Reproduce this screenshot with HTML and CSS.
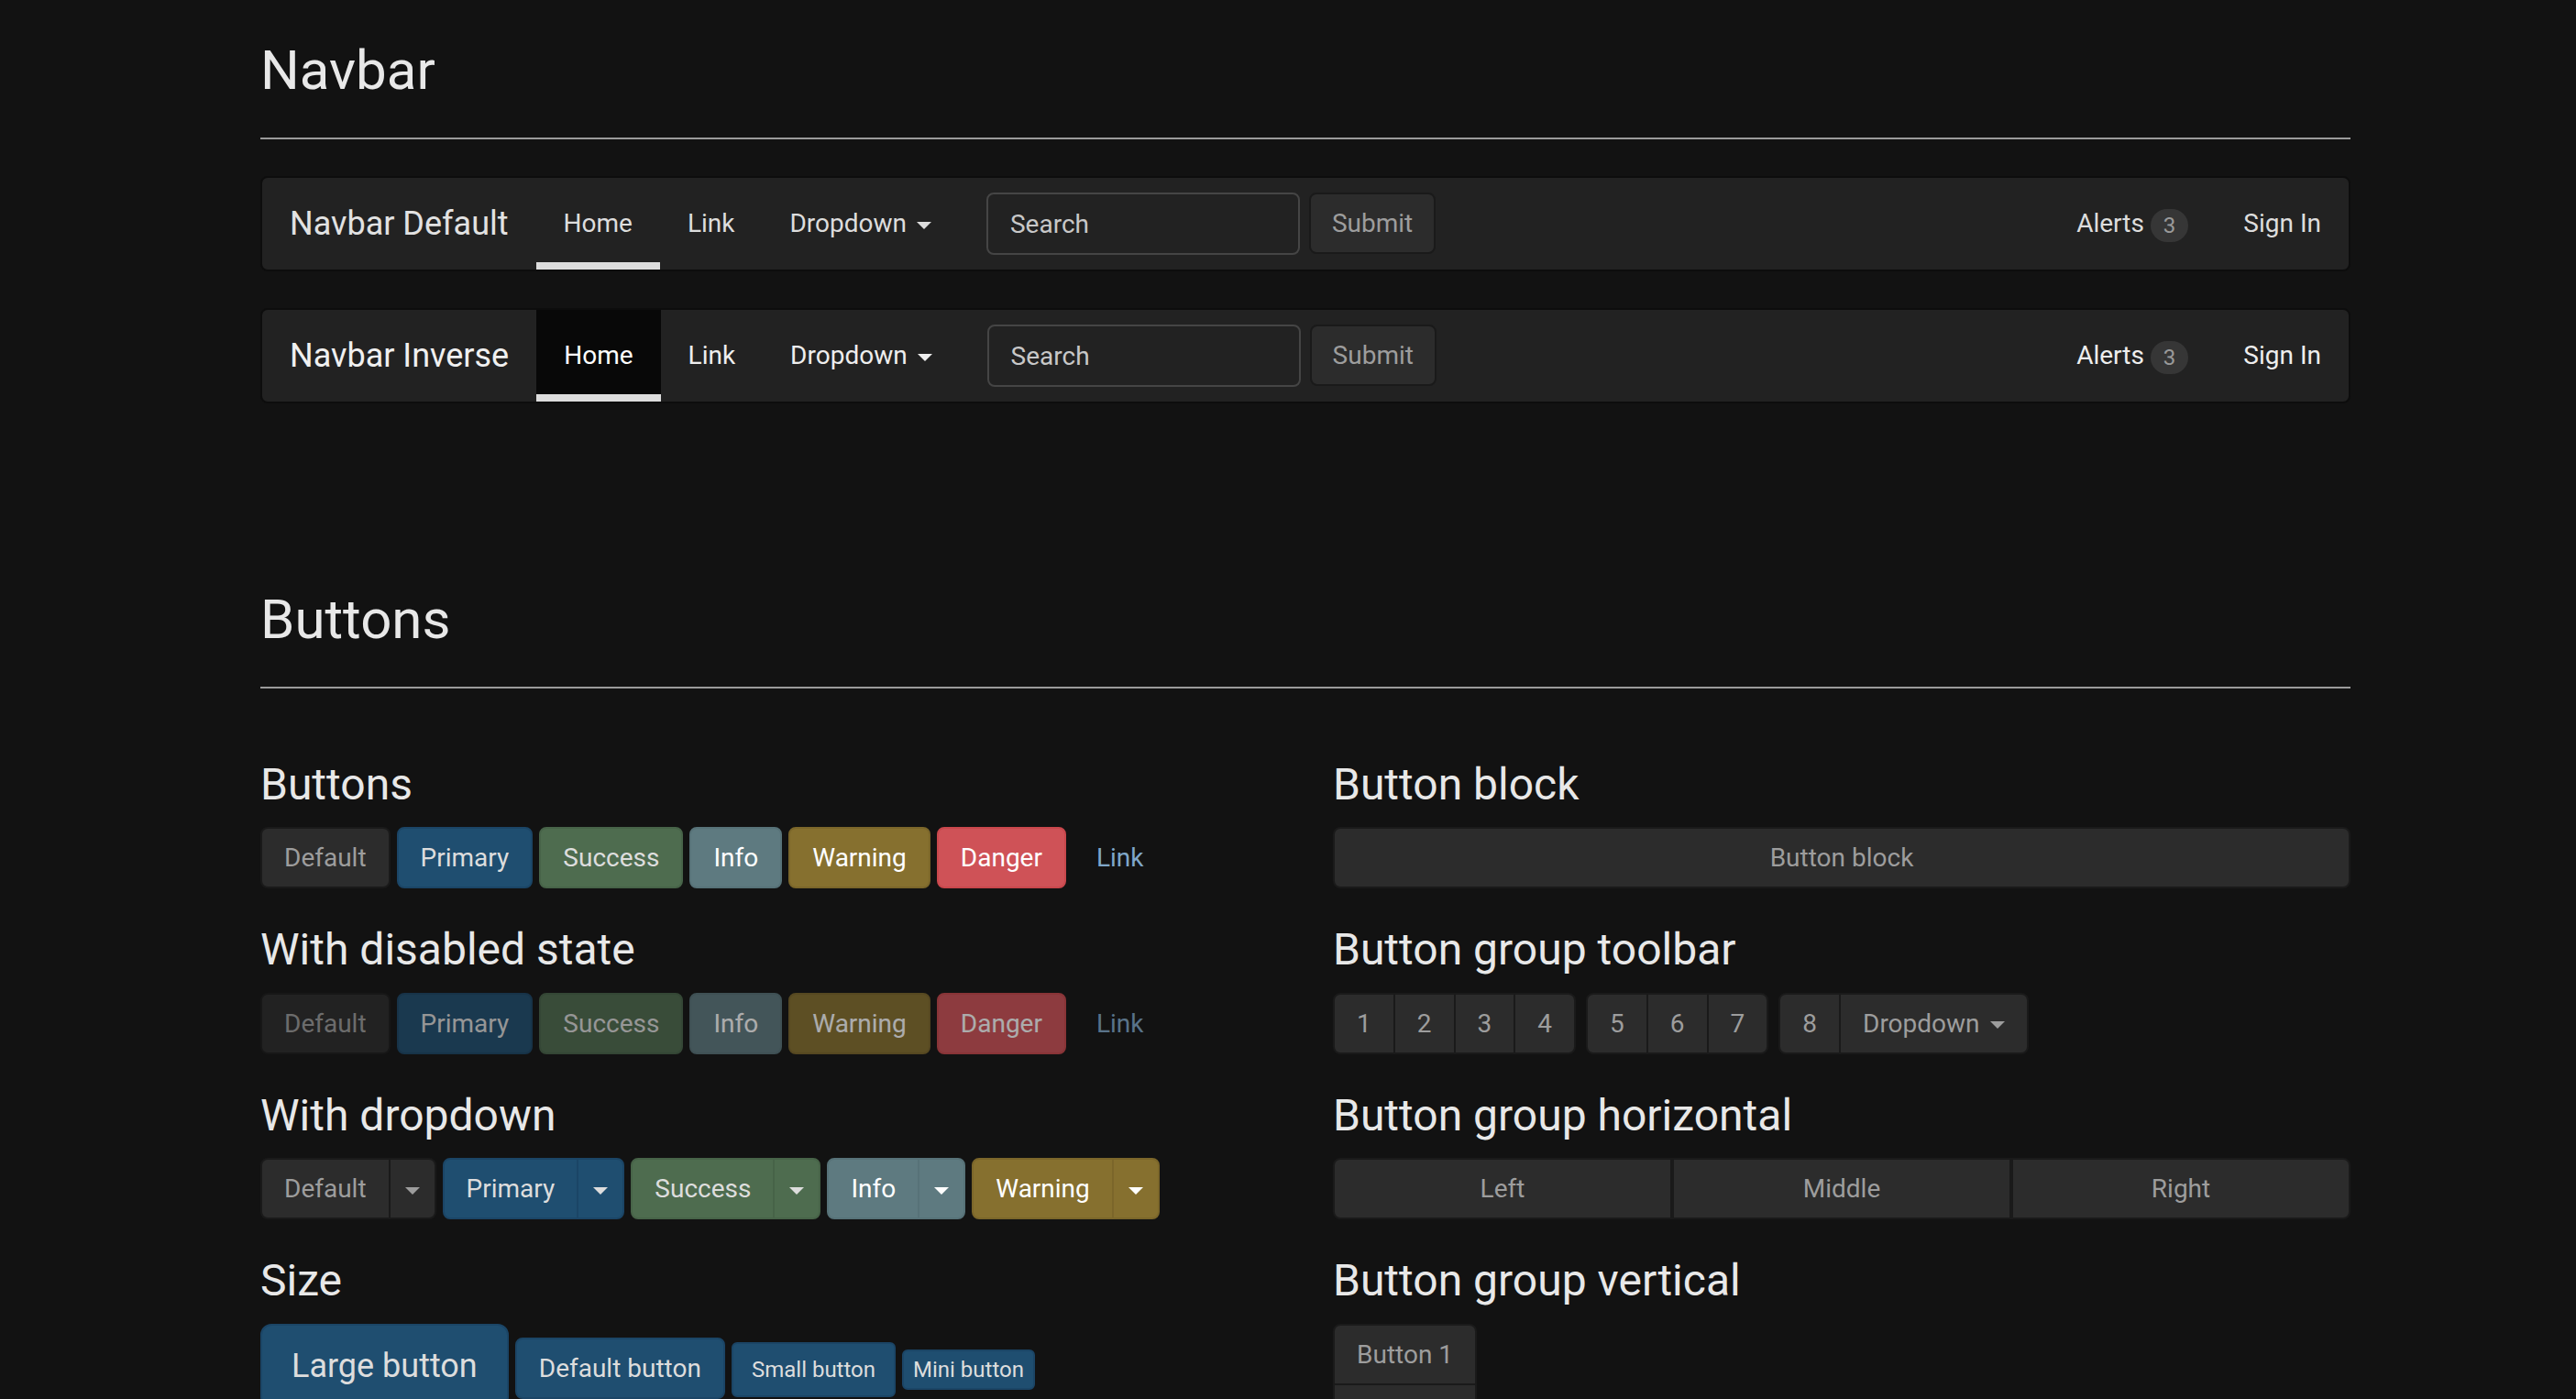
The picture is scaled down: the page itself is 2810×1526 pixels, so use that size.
FILE: index.html
```html
<!DOCTYPE html>
<html lang="en">
<head>
<meta charset="utf-8">
<title>Navbar &amp; Buttons</title>
<link rel="stylesheet" href="styles.css">
</head>
<body>
<div class="container">

  <section class="section section-navbar">
    <div class="page-header"><h1>Navbar</h1></div>

    <nav class="navbar">
      <a class="navbar-brand" href="#">Navbar Default</a>
      <ul class="nav">
        <li class="active"><a href="#">Home</a></li>
        <li><a href="#">Link</a></li>
        <li><a href="#">Dropdown <span class="caret"></span></a></li>
      </ul>
      <form class="navbar-form">
        <input class="form-control" type="text" placeholder="Search">
        <button type="button" class="btn">Submit</button>
      </form>
      <ul class="nav nav-right">
        <li><a href="#">Alerts <span class="badge">3</span></a></li>
        <li><a href="#">Sign In</a></li>
      </ul>
    </nav>

    <nav class="navbar navbar-inverse">
      <a class="navbar-brand" href="#">Navbar Inverse</a>
      <ul class="nav">
        <li class="active"><a href="#">Home</a></li>
        <li><a href="#">Link</a></li>
        <li><a href="#">Dropdown <span class="caret"></span></a></li>
      </ul>
      <form class="navbar-form">
        <input class="form-control" type="text" placeholder="Search">
        <button type="button" class="btn">Submit</button>
      </form>
      <ul class="nav nav-right">
        <li><a href="#">Alerts <span class="badge">3</span></a></li>
        <li><a href="#">Sign In</a></li>
      </ul>
    </nav>
  </section>

  <section class="section section-buttons">
    <div class="page-header"><h1>Buttons</h1></div>

    <div class="row">
      <div class="col">
        <h3>Buttons</h3>
        <div class="btn-row">
          <button type="button" class="btn">Default</button>
          <button type="button" class="btn btn-primary">Primary</button>
          <button type="button" class="btn btn-success">Success</button>
          <button type="button" class="btn btn-info">Info</button>
          <button type="button" class="btn btn-warning">Warning</button>
          <button type="button" class="btn btn-danger">Danger</button>
          <button type="button" class="btn btn-link">Link</button>
        </div>

        <h3>With disabled state</h3>
        <div class="btn-row">
          <button type="button" class="btn" disabled>Default</button>
          <button type="button" class="btn btn-primary" disabled>Primary</button>
          <button type="button" class="btn btn-success" disabled>Success</button>
          <button type="button" class="btn btn-info" disabled>Info</button>
          <button type="button" class="btn btn-warning" disabled>Warning</button>
          <button type="button" class="btn btn-danger" disabled>Danger</button>
          <button type="button" class="btn btn-link" disabled>Link</button>
        </div>

        <h3>With dropdown</h3>
        <div class="btn-row btn-row-split">
          <div class="btn-group">
            <button type="button" class="btn">Default</button>
            <button type="button" class="btn dropdown-toggle"><span class="caret"></span></button>
          </div>
          <div class="btn-group">
            <button type="button" class="btn btn-primary">Primary</button>
            <button type="button" class="btn btn-primary dropdown-toggle"><span class="caret"></span></button>
          </div>
          <div class="btn-group">
            <button type="button" class="btn btn-success">Success</button>
            <button type="button" class="btn btn-success dropdown-toggle"><span class="caret"></span></button>
          </div>
          <div class="btn-group">
            <button type="button" class="btn btn-info">Info</button>
            <button type="button" class="btn btn-info dropdown-toggle"><span class="caret"></span></button>
          </div>
          <div class="btn-group">
            <button type="button" class="btn btn-warning">Warning</button>
            <button type="button" class="btn btn-warning dropdown-toggle"><span class="caret"></span></button>
          </div>
        </div>

        <h3>Size</h3>
        <div class="btn-row btn-row-size">
          <button type="button" class="btn btn-primary btn-lg">Large button</button>
          <button type="button" class="btn btn-primary">Default button</button>
          <button type="button" class="btn btn-primary btn-sm">Small button</button>
          <button type="button" class="btn btn-primary btn-xs">Mini button</button>
        </div>
      </div>

      <div class="col">
        <h3>Button block</h3>
        <div class="btn-row">
          <button type="button" class="btn btn-block">Button block</button>
        </div>

        <h3>Button group toolbar</h3>
        <div class="btn-row btn-toolbar">
          <div class="btn-group">
            <button type="button" class="btn">1</button>
            <button type="button" class="btn">2</button>
            <button type="button" class="btn">3</button>
            <button type="button" class="btn">4</button>
          </div>
          <div class="btn-group">
            <button type="button" class="btn">5</button>
            <button type="button" class="btn">6</button>
            <button type="button" class="btn">7</button>
          </div>
          <div class="btn-group">
            <button type="button" class="btn">8</button>
            <button type="button" class="btn">Dropdown <span class="caret"></span></button>
          </div>
        </div>

        <h3>Button group horizontal</h3>
        <div class="btn-row">
          <div class="btn-group btn-group-justified">
            <button type="button" class="btn">Left</button>
            <button type="button" class="btn">Middle</button>
            <button type="button" class="btn">Right</button>
          </div>
        </div>

        <h3>Button group vertical</h3>
        <div class="btn-row">
          <div class="btn-group-vertical">
            <button type="button" class="btn">Button 1</button>
            <button type="button" class="btn">Button 2</button>
            <button type="button" class="btn">Button 3</button>
          </div>
        </div>
      </div>
    </div>
  </section>

</div>
</body>
</html>
```

FILE: styles.css
```css
html {
  overflow: hidden;
}

body {
  margin: 0;
  background: #121212;
  color: #dddddd;
  font-family: Roboto, "Noto Sans", "Liberation Sans", sans-serif;
  font-size: 28px;
  line-height: 40px;
}

.container {
  width: 2280px;
  margin-left: 284px;
}

.section-navbar {
  padding-top: 44px;
}

.section-buttons {
  padding-top: 203px;
}

.page-header {
  margin: 0 0 40px;
  padding-bottom: 18px;
  border-bottom: 2px solid #9a9a9a;
}

.page-header h1 {
  margin: 0 0 22px;
  font-size: 60px;
  line-height: 66px;
  font-weight: 400;
  color: #e8e8e8;
}

h3 {
  margin: 40px 0 20px;
  font-size: 48px;
  line-height: 53.4px;
  font-weight: 400;
  color: #e8e8e8;
}

.col > h3:first-child {
  margin-top: 38px;
}

/* ---------- Navbar ---------- */
.navbar {
  display: flex;
  height: 100px;
  background: #222222;
  border: 2px solid #0d0d0d;
  border-radius: 8px;
  margin-bottom: 40px;
}

.navbar:last-child {
  margin-bottom: 0;
}

.navbar-brand {
  padding: 0 30px;
  font-size: 36px;
  line-height: 100px;
  color: #e2e2e2;
  text-decoration: none;
  white-space: nowrap;
}

.nav {
  display: flex;
  list-style: none;
  margin: 0;
  padding: 0;
}

.nav a {
  display: block;
  padding: 30px;
  line-height: 40px;
  color: #dddddd;
  text-decoration: none;
  white-space: nowrap;
}

.nav .active a {
  box-shadow: inset 0 -8px 0 #dddddd;
}

.navbar-inverse .navbar-brand {
  color: #f0f0f0;
}

.navbar-inverse .nav a {
  color: #eeeeee;
}

.navbar-inverse .nav .active a {
  background: #080808;
  color: #ffffff;
}

.nav-right {
  margin-left: auto;
}

.navbar-form {
  display: flex;
  align-items: flex-start;
  margin: 16px 0 0;
  padding: 0 30px;
}

.form-control {
  box-sizing: border-box;
  width: 342px;
  height: 68px;
  padding: 12px 24px;
  font-family: inherit;
  font-size: 28px;
  line-height: 40px;
  color: #dddddd;
  background: #222222;
  border: 2px solid #454545;
  border-radius: 8px;
  outline: none;
}

.form-control::placeholder {
  color: #c8c8c8;
  opacity: 1;
}

.navbar-form .btn {
  margin-left: 10px;
  padding-left: 23px;
  padding-right: 23px;
}

.badge {
  display: inline-block;
  padding: 6px 14px;
  font-size: 24px;
  line-height: 24px;
  border-radius: 20px;
  background: #363636;
  color: #9a9a9a;
  vertical-align: middle;
}

.caret {
  display: inline-block;
  width: 0;
  height: 0;
  margin-left: 4px;
  border-top: 8px solid currentColor;
  border-left: 8px solid transparent;
  border-right: 8px solid transparent;
  vertical-align: middle;
}

/* ---------- Grid ---------- */
.row {
  display: grid;
  grid-template-columns: 1110px 1110px;
  column-gap: 60px;
}

.btn-row {
  display: flex;
  align-items: baseline;
  gap: 7px;
  margin-bottom: 20px;
}

.btn-row-split {
  gap: 7px;
}

.btn-toolbar {
  gap: 11px;
}

/* ---------- Buttons ---------- */
.btn {
  appearance: none;
  display: inline-block;
  margin: 0;
  padding: 12px 24px;
  font-family: inherit;
  font-size: 28px;
  line-height: 39px;
  font-weight: 400;
  text-align: center;
  white-space: nowrap;
  color: #9d9d9d;
  background: #2c2c2c;
  border: 2px solid #1a1a1a;
  border-radius: 8px;
  cursor: pointer;
}

.btn-primary {
  background: #1f4e70;
  border-color: #1b4566;
  color: #dddddd;
}

.btn-success {
  background: #4e6c4f;
  border-color: #476348;
  color: #dddddd;
}

.btn-info {
  background: #5e7a80;
  border-color: #577278;
  color: #ffffff;
}

.btn-warning {
  background: #86702f;
  border-color: #7b662a;
  color: #ffffff;
}

.btn-danger {
  background: #cf5257;
  border-color: #c9474c;
  color: #ffffff;
}

.btn-link {
  background: transparent;
  border-color: transparent;
  color: #7fa7c9;
}

.btn[disabled] {
  opacity: 0.65;
  cursor: default;
}

.btn-lg {
  padding: 20px 32px;
  font-size: 36px;
  line-height: 48px;
  border-radius: 12px;
}

.btn-sm {
  padding: 10px 20px;
  font-size: 24px;
  line-height: 36px;
  border-radius: 6px;
}

.btn-xs {
  padding: 2px 10px;
  font-size: 24px;
  line-height: 36px;
  border-radius: 6px;
}

.btn-block {
  display: block;
  width: 100%;
}

.btn-group {
  display: inline-flex;
}

.btn-group > .btn + .btn {
  margin-left: -2px;
}

.btn-group > .btn:not(:last-child) {
  border-top-right-radius: 0;
  border-bottom-right-radius: 0;
}

.btn-group > .btn:not(:first-child) {
  border-top-left-radius: 0;
  border-bottom-left-radius: 0;
}

.dropdown-toggle {
  padding-left: 16px;
  padding-right: 16px;
}

.dropdown-toggle .caret {
  margin-left: 0;
}

.btn-group-justified {
  display: flex;
  width: 100%;
}

.btn-group-justified > .btn {
  flex: 1 1 0;
}

.btn-group-justified > .btn + .btn {
  margin-left: 0;
}

.btn-group-vertical {
  display: inline-flex;
  flex-direction: column;
}

.btn-group-vertical > .btn + .btn {
  margin-top: -2px;
}

.btn-group-vertical > .btn:not(:last-child) {
  border-bottom-left-radius: 0;
  border-bottom-right-radius: 0;
}

.btn-group-vertical > .btn:not(:first-child) {
  border-top-left-radius: 0;
  border-top-right-radius: 0;
}
```
